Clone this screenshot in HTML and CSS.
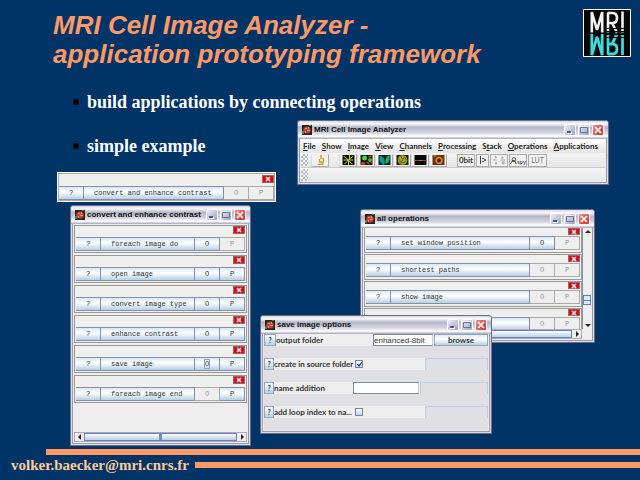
FILE: index.html
```html
<!DOCTYPE html>
<html lang="en">
<head>
<meta charset="utf-8">
<title>MRI Cell Image Analyzer</title>
<link rel="stylesheet" href="styles.css">
<script src="windows.js" defer></script>
</head>
<body>
<svg class="defs" aria-hidden="true">
  <symbol id="app" viewBox="0 0 10 10"><path fill="#222a16" d="M0 0h10v10H0z"/><circle cx="5" cy="5" r="3.6" fill="#c8403c"/><path d="M3 3h2v1H3zM5 5h3v1H5zM3 6h1v2H3zM6 2h1v2H6z" fill="#f08a80"/><path d="M0 6h2v3H0zM7 0h2v1H7z" fill="#4e8a3c"/></symbol>
  <symbol id="min" viewBox="0 0 10 10"><path d="M2 7h5v2H2z" fill="#fff"/><path d="M2 6h4v2H2z" fill="#50577c"/></symbol>
  <symbol id="max" viewBox="0 0 10 10"><path d="M1.5 2.5h7v5h-7z" fill="none" stroke="#6b7396"/><path d="M1 1h8v1H1z" fill="#f4f5fb"/></symbol>
  <symbol id="close" viewBox="0 0 10 10"><path d="M2 2l6 6M8 2l-6 6" stroke="#fff" stroke-width="1.6"/></symbol>
</svg>
<main class="slide">
  <header class="head">
    <h1>MRI Cell Image Analyzer -<br>application prototyping framework</h1>
    <svg class="logo" viewBox="0 0 48 48" role="img" aria-label="MRI">
      <path d="M.5.5h47v47H.5z" fill="#060606" stroke="#fff"/>
      <g fill="none" stroke="#f2f2f2" stroke-width="2.6" stroke-linejoin="bevel"><path d="M8.800 23.500V3l5.200 18 5.200-18v20.500M25 23.500V4h4.500q4.500 0 4.500 5t-4.500 5H25M29 14l5 9.500M39.500 2.500v21"/></g>
      <g fill="none" stroke="#3fd8dc" stroke-width="2.800" stroke-linejoin="bevel"><path d="M8.800 25v21L14 28l5.200 18V25M25 25v20h4.500q4.500 0 4.500-5t-4.500-5H25M29 35l5-10M39.500 25v21"/></g>
      <path d="M23 19.500h18M23 22.500h18M23 25.500h18M23 28.500h18" stroke="#060606"/>
    </svg>
  </header>
  <ul class="points">
    <li>build applications by connecting operations</li>
    <li>simple example</li>
  </ul>

  <section class="window win-main">
    <div class="titlebar" data-title="MRI Cell Image Analyzer"></div>
    <nav class="menubar">
      <a href="#file"><u>F</u>ile</a><a href="#show"><u>S</u>how</a><a href="#image"><u>I</u>mage</a><a href="#view"><u>V</u>iew</a><a href="#channels"><u>C</u>hannels</a><a href="#processing"><u>P</u>rocessing</a><a href="#stack">S<u>t</u>ack</a><a href="#operations"><u>O</u>perations</a><a href="#applications"><u>A</u>pplications</a>
    </nav>
    <div class="toolbar">
      <i class="grip"></i>
      <div class="tools">
        <button class="tool" aria-label="Microscope"><svg viewBox="0 0 12 10"><path d="M6.500 0v4M5 4v3h3M8 3q3 3-1 6M3 9.500h6" fill="none" stroke="#d89a28" stroke-width="1.400"/></svg></button>
      </div>
      <div class="tools">
        <button class="tool" aria-label="Neurons"><svg viewBox="0 0 12 10"><path fill="#080a04" d="M0 0h12v10H0z"/><path d="M1 1l4 3 1 2 4 3M11 1L7 4 2 9M1 5h10M7 0v4M6 6v4" stroke="#cfd42c" fill="none"/></svg></button>
        <button class="tool" aria-label="Cells"><svg viewBox="0 0 12 10"><path fill="#0c1408" d="M0 0h12v10H0z"/><circle cx="4" cy="3" r="2.500" fill="#4ed13c"/><circle cx="9.500" cy="5" r="2" fill="#48c038"/><path d="M1 8h3v1H1zM6 7l3 2M8 2l3-1M10 7l2 1" stroke="#d8402c" stroke-width="1.500"/></svg></button>
        <button class="tool" aria-label="Nuclei"><svg viewBox="0 0 12 10"><path fill="#0a2428" d="M0 0h12v10H0z"/><path d="M1 1q4 0 5 4t-1 5Q0 7 1 1" fill="#18948a"/><path d="M11 0Q6 2 7 9q5-1 4-9" fill="#2aa862"/></svg></button>
        <button class="tool" aria-label="Texture"><svg viewBox="0 0 12 10"><path fill="#1a1c08" d="M0 0h12v10H0z"/><circle cx="6" cy="5" r="4.800" fill="#a9a325"/><path d="M2 4l3 3 3-5 3 4M3 8l6-1M4 1l2 3" stroke="#5c6416" fill="none"/></svg></button>
        <button class="tool" aria-label="Line profile"><svg viewBox="0 0 12 10"><path fill="#080808" d="M0 0h12v10H0z"/><path d="M0 5.500h4M8 5.500h4" stroke="#d02c2c"/><path d="M4 5.500h4" stroke="#54a03c"/></svg></button>
        <button class="tool" aria-label="Spot"><svg viewBox="0 0 12 10"><path fill="#683408" d="M0 0h12v10H0z"/><circle cx="6.500" cy="5.500" r="2.800" fill="#3a1a06" stroke="#d98528" stroke-width="1.800"/><path d="M0 0h4v2H0z" fill="#a65c14"/></svg></button>
      </div>
      <div class="tools text-tools">
        <button class="tool">0bit</button>
        <button class="tool small" aria-label="Play"><svg viewBox="0 0 8 10"><path d="M1.500 1v8M3 3l4 2-4 2" fill="none" stroke="#444"/></svg></button>
        <button class="tool" aria-label="Split"><svg viewBox="0 0 14 10"><path d="M3 1v2M2 2h2M10 1l1 2M9 3h2M3 7l1 2M2 9h2M10 7h2v2h-2zM0 5h4M8 5h5" fill="none" stroke="#999"/></svg></button>
        <button class="tool spy"><svg viewBox="0 0 9 10"><circle cx="5" cy="3" r="2.200" fill="none" stroke="#222"/><path d="M0 9l4-5M2 5h5M6 5l2 4" stroke="#222" fill="none"/></svg>spy</button>
        <button class="tool lut">LUT</button>
      </div>
    </div>
    <div class="toolbar empty"><i class="grip"></i></div>
  </section>

  <section class="strip" data-ops="convert and enhance contrast|0|0"></section>

  <section class="window win-convert">
    <div class="titlebar" data-title="convert and enhance contrast"></div>
    <div class="oplist" data-ops="foreach image do|1|0;open image|1|1;convert image type|1|1;enhance contrast|1|1;save image|2|1;foreach image end|0|1"></div>
    <div class="hscroll"><button class="arrow" aria-label="Scroll left"><svg viewBox="0 0 8 8"><path d="M5 1v6L2 4z" fill="#222"/></svg></button><div class="thumb"><i></i></div><button class="arrow" aria-label="Scroll right"><svg viewBox="0 0 8 8"><path d="M3 1v6l3-3z" fill="#222"/></svg></button></div>
  </section>

  <section class="window win-all">
    <div class="titlebar" data-title="all operations"></div>
    <div class="pane">
      <div class="column">
        <div class="oplist compact" data-ops="set window position|1|0;shortest paths|0|0;show image|0|0;|0|0"></div>
        <div class="hscroll"><div class="thumb"></div><button class="arrow" aria-label="Scroll right"><svg viewBox="0 0 8 8"><path d="M3 1v6l3-3z" fill="#222"/></svg></button></div>
      </div>
      <div class="vscroll"><button class="arrow" aria-label="Scroll up"><svg viewBox="0 0 8 8"><path d="M1 5h6L4 2z" fill="#222"/></svg></button><div class="track"><i></i></div><button class="arrow" aria-label="Scroll down"><svg viewBox="0 0 8 8"><path d="M1 3h6L4 6z" fill="#222"/></svg></button></div>
    </div>
  </section>

  <section class="window win-save">
    <div class="titlebar" data-title="save image options"></div>
    <form class="options">
      <div class="option"><button type="button" class="help wide">?</button><label for="out">output folder</label><input id="out" class="out" type="text" value="enhanced-8bit"><button type="button" class="browse">browse</button></div>
      <div class="option"><button type="button" class="help">?</button><label for="src">create in source folder</label><input id="src" type="checkbox" checked><span class="blank"></span></div>
      <div class="option"><button type="button" class="help">?</button><label for="add">name addition</label><input id="add" class="add" type="text"><span class="blank after-text"></span></div>
      <div class="option"><button type="button" class="help">?</button><label for="idx">add loop index to na...</label><input id="idx" type="checkbox"><span class="blank"></span></div>
    </form>
  </section>

  <footer class="foot">
    <div class="bar upper"></div>
    <div class="contact"><a href="mailto:volker.baecker@mri.cnrs.fr">volker.baecker@mri.cnrs.fr</a><div class="bar"></div></div>
  </footer>
</main>
</body>
</html>
```
FILE: styles.css
```css
* { box-sizing: border-box; }
body { margin: 0; background: #003366; font-family: "Liberation Sans", sans-serif; }
button, input { font: inherit; color: inherit; margin: 0; padding: 0; border-radius: 0; }
svg { display: block; flex: none; }
.defs { position: absolute; width: 0; height: 0; }

.slide { position: relative; min-height: 100vh; display: flex; flex-direction: column; overflow: hidden; }
.head { display: flex; justify-content: space-between; align-items: flex-start; padding: 9px 9px 0 53px; }
h1 { margin: 2px 0 0; font-size: 26px; line-height: 29px; font-weight: bold; font-style: italic; color: #ff9966; }
.logo { width: 48px; height: 48px; }
.points { list-style: none; margin: 23px 0 0; padding: 0 0 0 73px; color: #fff; font: bold 18px/20px "Liberation Serif", serif; }
.points li { display: flex; align-items: center; gap: 8px; margin-bottom: 24px; }
.points li::before { content: ""; width: 6px; height: 6px; border-radius: 50%; background: #000; }

.foot { margin-top: auto; padding-bottom: 6px; }
.bar { height: 6px; flex: 1; background: #ff9966; }
.upper { margin-left: 46px; margin-bottom: 1px; }
.contact { display: flex; align-items: center; gap: 6px; padding-left: 11px; }
.contact a { color: #ffcc99; text-decoration: none; font: bold 15px/18px "Liberation Serif", serif; }

/* windows */
.window { position: absolute; display: flex; flex-direction: column; padding: 0 3px 3px; background: #eee; border: 1px solid #6b6b85; border-radius: 3px 3px 0 0; box-shadow: inset 0 0 0 1px #dcdce8, inset 0 0 0 2px #9a9ab0; color: #333; font: bold 8px/10px Lato, "Liberation Sans", sans-serif; }
.win-main { left: 297px; top: 120px; width: 312px; }
.win-convert { left: 70px; top: 205px; width: 181px; height: 241px; }
.win-all { left: 360px; top: 209px; width: 235px; height: 134px; }
.win-save { left: 260px; top: 315px; width: 232px; height: 119px; }
.titlebar { display: flex; align-items: center; gap: 2px; height: 18px; flex: none; margin: 0 -3px; padding: 0 4px; border-radius: 3px 3px 0 0; background: linear-gradient(#d6d6e2, #fafafd 15%, #b4b5c8 35%, #d4d4e0 65%, #fff 85%, #a0a0b8); color: #111; }
.titlebar > svg { width: 10px; height: 10px; }
.titlebar span { flex: 1; font-family: "Liberation Sans", sans-serif; white-space: nowrap; }
.titlebar button { width: 12px; height: 12px; flex: none; border: 1px solid #fff; border-radius: 2px; background: linear-gradient(135deg, #eceef8, #9aa2c4); }
.titlebar button svg { width: 10px; height: 10px; }
.titlebar .close { background: linear-gradient(135deg, #f08c80, #c03030); }

.menubar { display: flex; justify-content: space-between; align-items: center; height: 14px; padding: 0 7px 0 2px; background: linear-gradient(#fff, #e4e4e4); }
.menubar a { color: #222; text-decoration: none; }
.toolbar { display: flex; align-items: center; gap: 10px; height: 15px; background: linear-gradient(#f4f4f4, #e6e6e6); border-bottom: 1px solid #ccc; }
.toolbar.empty { height: 13px; border: 0; }
.grip { width: 7px; height: 12px; margin-right: -7px; background: conic-gradient(#b4bcc8 25%, #f4f4f4 0 50%, #b4bcc8 0 75%, #f4f4f4 0) 0 0 / 4px 4px; }
.tools { display: flex; }
.tool { display: flex; align-items: center; justify-content: center; width: 18px; height: 13px; border: 1px solid #aaa; border-top-color: #eee; border-left-color: #ddd; background: #f2f2f2; }
.tool svg { width: 13px; height: 10px; }
.text-tools { gap: 1px; }
.text-tools .tool { border-color: #aaa; }
.text-tools .small { width: 13px; }
.small svg { width: 8px; }
.spy svg { width: 7px; }
.spy { align-items: flex-end; font-size: 6px; line-height: 8px; font-weight: normal; }
.lut { width: 19px; color: #777; font-size: 7px; font-weight: normal; }

/* operation panels */
.oplist { flex: 1; min-height: 0; display: flex; flex-direction: column; gap: 2px; padding: 1px 0; overflow: hidden; }
.op { flex: none; height: 28px; padding: 0 1px; border: 1px solid #999; background: #efefee; }
.op .kill { display: block; width: 12px; height: 8px; margin: 0 0 3px auto; border: 1px solid #966; background: #d80c14; }
.kill svg { width: 6px; height: 6px; margin: auto; }
.row { display: flex; height: 14px; font: 7px/12px "Liberation Mono", monospace; color: #333; }
.row button { width: 25px; border: 1px solid #8492a4; border-left-width: 0; background: linear-gradient(#d8e6f4, #fff 40%, #b8cfe5); }
.row .name { flex: 1; padding-left: 10px; text-align: left; }
.row button:disabled { color: #999; border-color: #aaa; background: #eee; }
.row .focus span { outline: 1px solid #8aa4c8; }
.compact { gap: 1px; padding: 0; }
.compact .op { height: 26px; }
.compact .op .kill { height: 7px; margin: 0 0 1px auto; }
.compact .op:first-child { height: 25px; border-top: 0; }
.strip { position: absolute; left: 57px; top: 172px; width: 219px; }
.strip .op { height: 30px; border-color: #fff; box-shadow: inset 0 0 0 1px #aaa; padding: 2px 1px; }

.hscroll { display: flex; flex: none; height: 10px; border: 1px solid #aab; }
.arrow { display: grid; place-items: center; width: 9px; height: 8px; flex: none; border: 0; background: #eee; }
.arrow svg { width: 8px; height: 8px; }
.thumb { flex: 1; border: 1px solid #6382bf; background: linear-gradient(#fff, #b8cfe5); display: grid; place-items: center; }
.thumb i { width: 3px; height: 6px; background: #6c8fc8; }
.pane { display: flex; flex: 1; min-height: 0; }
.column { flex: 1; display: flex; flex-direction: column; min-width: 0; }
.vscroll { width: 9px; display: flex; flex-direction: column; border-left: 1px solid #8492a4; margin-bottom: 10px; }
.track { flex: 1; display: flex; align-items: flex-end; background: #eee; }
.track i { width: 100%; height: 10px; margin-bottom: 16px; border: 1px solid #6382bf; background: linear-gradient(#dbe7f5 45%, #6382bf 45% 60%, #dbe7f5 60%); }

/* options form */
.options { display: flex; flex-direction: column; gap: 12px; flex: 1; background: #e0dfe3; }
.option { display: flex; align-items: center; height: 12px; background: #eee; }
.help { width: 10px; height: 12px; flex: none; border: 1px solid #8ea6c0; background: linear-gradient(#fff, #b8cfe5); font-size: 7px; line-height: 8px; }
.help.wide { width: 12px; }
.option label { flex: 1; min-width: 0; white-space: nowrap; }
.option input { flex: none; }
.option input[type=text] { height: 12px; border: 1px solid #7a8a99; border-right-color: #ccd; background: #fff; font-weight: normal; }
.option .out { width: 60px; font-family: "Liberation Sans", sans-serif; }
.option .add { width: 66px; }
.browse { width: 54px; height: 12px; margin-left: 1px; border: 1px solid #8ea6c0; background: linear-gradient(#dfeaf5, #fff 40%, #b8cfe5); line-height: 9px; }
.blank { flex: none; width: 63px; height: 12px; margin-left: 62px; border: 1px solid #b8cfe5; border-bottom: 0; background: #e0dfe3; }
.after-text { width: 68px; margin-left: 1px; }
.option input[type=checkbox] { appearance: none; width: 8px; height: 8px; border: 1px solid #6f86a4; background: linear-gradient(#fff, #c4d6e8); }
.option input[type=checkbox]:checked::before { content: ""; display: block; width: 2px; height: 4px; margin: 0 2px; border: solid #222; border-width: 0 1px 1px 0; transform: rotate(40deg); }
```
FILE: windows.js
```js
const icon = (name) => `<svg><use href="#${name}"/></svg>`;

document.querySelectorAll(".titlebar").forEach((bar) => {
  bar.innerHTML = `${icon("app")}<span>${bar.dataset.title}</span>
    <button aria-label="Minimize">${icon("min")}</button>
    <button aria-label="Maximize">${icon("max")}</button>
    <button class="close" aria-label="Close">${icon("close")}</button>`;
});

// Each entry is "name|open|process"; 0 = disabled, 1 = enabled, 2 = focused.
const stateButton = (letter, state) =>
  `<button ${state === "0" ? "disabled" : ""} class="${state === "2" ? "focus" : ""}"><span>${letter}</span></button>`;

document.querySelectorAll("[data-ops]").forEach((list) => {
  list.innerHTML = list.dataset.ops.split(";").map((entry) => {
    const [name, open, process] = entry.split("|");
    return `<div class="op">
      <button class="kill" aria-label="Remove"><svg viewBox="0 0 6 6"><path d="M1 1l4 4M5 1L1 5" stroke="#fff" stroke-width="1.300"/></svg></button>
      <div class="row"><button>?</button><button class="name">${name}</button>${stateButton("O", open)}${stateButton("P", process)}</div>
    </div>`;
  }).join("");
});
```
